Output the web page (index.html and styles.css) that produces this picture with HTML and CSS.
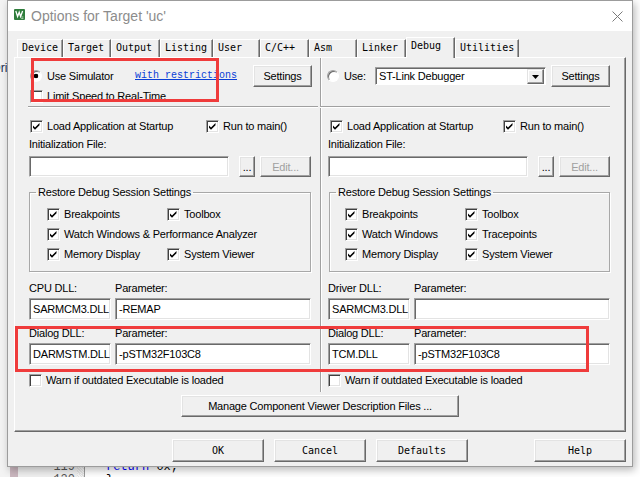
FILE: index.html
```html
<!DOCTYPE html>
<html>
<head>
<meta charset="utf-8">
<title>Options for Target 'uc'</title>
<link rel="stylesheet" href="styles.css">
</head>
<body>
<div class="desk">
  <div class="proj"><span class="proj-text">Driver</span></div>
  <div class="editor">
    <div class="code-line"><span class="band"></span><span class="ln">119</span><span class="fold"></span><span class="code"><span class="kw">return</span> 0x;</span></div>
    <div class="code-line"><span class="band"></span><span class="ln">120</span><span class="fold"></span><span class="code code-close">}</span></div>
  </div>
</div>

<div class="dialog">
  <div class="titlebar">
    <svg class="app-icon" viewBox="0 0 11 11" aria-hidden="true">
      <rect width="11" height="11" rx="1" fill="#2f7d3c"/>
      <path d="M1.8 2 L3.6 7.5 L5.2 3.2 L6.6 7.5 L8.6 2" stroke="#fff" stroke-width="1.3" fill="none"/>
      <path d="M7.2 8 h2.2 M7.2 9.6 h2.2" stroke="#cfe8cf" stroke-width="0.8"/>
    </svg>
    <span class="title">Options for Target 'uc'</span>
    <svg class="close" viewBox="0 0 11 11" aria-hidden="true">
      <path d="M0.5 0.5 L10.5 10.5 M10.5 0.5 L0.5 10.5" stroke="#7a7a7a" stroke-width="1"/>
    </svg>
  </div>

  <div class="client">
    <div class="tabs">
      <div class="tab t-device">Device</div>
      <div class="tab t-target">Target</div>
      <div class="tab t-output">Output</div>
      <div class="tab t-listing">Listing</div>
      <div class="tab t-user">User</div>
      <div class="tab t-cc">C/C++</div>
      <div class="tab t-asm">Asm</div>
      <div class="tab t-linker">Linker</div>
      <div class="tab t-debug active">Debug</div>
      <div class="tab t-util">Utilities</div>
    </div>

    <div class="panel">
      <div class="cols">
        <!-- LEFT: simulator -->
        <div class="col col-left">
          <div class="row row-use">
            <span class="opt opt-sim"><span class="radio on"></span>Use Simulator</span>
            <span class="link">with restrictions</span>
            <span class="btn btn-settings">Settings</span>
          </div>
          <div class="row row-limit">
            <span class="opt opt-first"><span class="cb"></span>Limit Speed to Real-Time</span>
          </div>
          <div class="sep sep-left"></div>
          <div class="row row-load">
            <span class="opt load-l"><span class="cb checked"><svg viewBox="0 0 11 11"><path d="M2 4.5 L4 6.5 L8.5 2 L8.5 4.2 L4 8.7 L2 6.7 Z" fill="#000"/></svg></span>Load Application at Startup</span>
            <span class="opt"><span class="cb checked"><svg viewBox="0 0 11 11"><path d="M2 4.5 L4 6.5 L8.5 2 L8.5 4.2 L4 8.7 L2 6.7 Z" fill="#000"/></svg></span>Run to main()</span>
          </div>
          <div class="row row-label">Initialization File:</div>
          <div class="row row-file">
            <div class="field field-file"></div>
            <span class="btn btn-dots">...</span>
            <span class="btn btn-edit disabled">Edit...</span>
          </div>
          <fieldset class="group">
            <legend>Restore Debug Session Settings</legend>
            <div class="group-grid">
              <span class="opt"><span class="cb checked"><svg viewBox="0 0 11 11"><path d="M2 4.5 L4 6.5 L8.5 2 L8.5 4.2 L4 8.7 L2 6.7 Z" fill="#000"/></svg></span>Breakpoints</span>
              <span class="opt"><span class="cb checked"><svg viewBox="0 0 11 11"><path d="M2 4.5 L4 6.5 L8.5 2 L8.5 4.2 L4 8.7 L2 6.7 Z" fill="#000"/></svg></span>Toolbox</span>
              <span class="opt span2"><span class="cb checked"><svg viewBox="0 0 11 11"><path d="M2 4.5 L4 6.5 L8.5 2 L8.5 4.2 L4 8.7 L2 6.7 Z" fill="#000"/></svg></span>Watch Windows &amp; Performance Analyzer</span>
              <span class="opt"><span class="cb checked"><svg viewBox="0 0 11 11"><path d="M2 4.5 L4 6.5 L8.5 2 L8.5 4.2 L4 8.7 L2 6.7 Z" fill="#000"/></svg></span>Memory Display</span>
              <span class="opt"><span class="cb checked"><svg viewBox="0 0 11 11"><path d="M2 4.5 L4 6.5 L8.5 2 L8.5 4.2 L4 8.7 L2 6.7 Z" fill="#000"/></svg></span>System Viewer</span>
            </div>
          </fieldset>
          <div class="row row-dll-label"><span class="dll-lab">CPU DLL:</span><span>Parameter:</span></div>
          <div class="row row-dll">
            <div class="field field-dll">SARMCM3.DLL</div>
            <div class="field field-param">-REMAP</div>
          </div>
          <div class="row row-dll-label second"><span class="dll-lab">Dialog DLL:</span><span>Parameter:</span></div>
          <div class="row row-dll">
            <div class="field field-dll">DARMSTM.DLL</div>
            <div class="field field-param">-pSTM32F103C8</div>
          </div>
          <div class="row row-warn">
            <span class="opt"><span class="cb"></span>Warn if outdated Executable is loaded</span>
          </div>
        </div>

        <!-- RIGHT: target debugger -->
        <div class="col col-right">
          <div class="row row-use">
            <span class="opt opt-use"><span class="radio"></span>Use:</span>
            <div class="select">
              <span class="select-text">ST-Link Debugger</span>
              <span class="select-arrow"><svg viewBox="0 0 7 4"><path d="M0 0 H7 L3.5 4 Z" fill="#000"/></svg></span>
            </div>
            <span class="btn btn-settings btn-settings-r">Settings</span>
          </div>
          <div class="row row-limit"></div>
          <div class="sep sep-right"></div>
          <div class="row row-load">
            <span class="opt load-r"><span class="cb checked"><svg viewBox="0 0 11 11"><path d="M2 4.5 L4 6.5 L8.5 2 L8.5 4.2 L4 8.7 L2 6.7 Z" fill="#000"/></svg></span>Load Application at Startup</span>
            <span class="opt"><span class="cb checked"><svg viewBox="0 0 11 11"><path d="M2 4.5 L4 6.5 L8.5 2 L8.5 4.2 L4 8.7 L2 6.7 Z" fill="#000"/></svg></span>Run to main()</span>
          </div>
          <div class="row row-label">Initialization File:</div>
          <div class="row row-file">
            <div class="field field-file"></div>
            <span class="btn btn-dots">...</span>
            <span class="btn btn-edit disabled">Edit...</span>
          </div>
          <fieldset class="group group-r">
            <legend>Restore Debug Session Settings</legend>
            <div class="group-grid">
              <span class="opt"><span class="cb checked"><svg viewBox="0 0 11 11"><path d="M2 4.5 L4 6.5 L8.5 2 L8.5 4.2 L4 8.7 L2 6.7 Z" fill="#000"/></svg></span>Breakpoints</span>
              <span class="opt"><span class="cb checked"><svg viewBox="0 0 11 11"><path d="M2 4.5 L4 6.5 L8.5 2 L8.5 4.2 L4 8.7 L2 6.7 Z" fill="#000"/></svg></span>Toolbox</span>
              <span class="opt"><span class="cb checked"><svg viewBox="0 0 11 11"><path d="M2 4.5 L4 6.5 L8.5 2 L8.5 4.2 L4 8.7 L2 6.7 Z" fill="#000"/></svg></span>Watch Windows</span>
              <span class="opt"><span class="cb checked"><svg viewBox="0 0 11 11"><path d="M2 4.5 L4 6.5 L8.5 2 L8.5 4.2 L4 8.7 L2 6.7 Z" fill="#000"/></svg></span>Tracepoints</span>
              <span class="opt"><span class="cb checked"><svg viewBox="0 0 11 11"><path d="M2 4.5 L4 6.5 L8.5 2 L8.5 4.2 L4 8.7 L2 6.7 Z" fill="#000"/></svg></span>Memory Display</span>
              <span class="opt"><span class="cb checked"><svg viewBox="0 0 11 11"><path d="M2 4.5 L4 6.5 L8.5 2 L8.5 4.2 L4 8.7 L2 6.7 Z" fill="#000"/></svg></span>System Viewer</span>
            </div>
          </fieldset>
          <div class="row row-dll-label"><span class="dll-lab">Driver DLL:</span><span>Parameter:</span></div>
          <div class="row row-dll">
            <div class="field field-dll">SARMCM3.DLL</div>
            <div class="field field-param"></div>
          </div>
          <div class="row row-dll-label second"><span class="dll-lab">Dialog DLL:</span><span>Parameter:</span></div>
          <div class="row row-dll">
            <div class="field field-dll">TCM.DLL</div>
            <div class="field field-param">-pSTM32F103C8</div>
          </div>
          <div class="row row-warn">
            <span class="opt"><span class="cb"></span>Warn if outdated Executable is loaded</span>
          </div>
        </div>
      </div>
      <div class="manage-row">
        <span class="btn btn-manage">Manage Component Viewer Description Files ...</span>
      </div>
    </div>

    <div class="footer">
      <span class="btn fbtn fbtn-ok">OK</span>
      <span class="btn fbtn">Cancel</span>
      <span class="btn fbtn">Defaults</span>
      <span class="btn fbtn fbtn-help">Help</span>
    </div>
  </div>

  <div class="mark mark1"></div>
  <div class="mark mark2"></div>
</div>
</body>
</html>
```

FILE: styles.css
```css
* { box-sizing: border-box; }
html, body { margin: 0; padding: 0; }
body {
  width: 640px;
  height: 477px;
  overflow: hidden;
  position: relative;
  background: #ffffff;
  font-family: "Liberation Sans", Arial, sans-serif;
  font-size: 11px;
  letter-spacing: -0.2px;
  line-height: 14px;
  color: #000;
}

/* ---------- background editor ---------- */
.desk { display: flex; height: 477px; }
.proj {
  width: 10px;
  flex: none;
  background: #f3f3f3;
  padding-top: 61px;
  overflow: hidden;
}
.proj-text {
  display: block;
  margin-left: -8px;
  font-size: 12px;
  letter-spacing: 0;
  color: #1b2a4e;
  white-space: nowrap;
}
.editor { flex: 1; padding-top: 461px; }
.code-line {
  display: flex;
  height: 13px;
  font-family: "Liberation Mono", monospace;
  font-size: 12px;
  line-height: 13px;
  letter-spacing: 0;
}
.band { width: 8px; background: #cbb7bf; flex: none; }
.ln {
  width: 59px;
  flex: none;
  background: #f0f0f0;
  color: #555;
  text-align: right;
  padding-right: 2px;
}
.fold {
  width: 8px;
  flex: none;
  background: repeating-linear-gradient(45deg, #e4e4e4 0 1px, #f6f6f6 1px 2px);
  border-right: 1px solid #9a9a9a;
}
.code { padding-left: 21px; color: #000; white-space: pre; }
.kw { color: #0000ff; }

/* ---------- dialog ---------- */
.dialog {
  position: absolute;
  left: 7px;
  top: 0;
  width: 626px;
  height: 467px;
  border: 1px solid #9c9c9c;
  background: #f0f0f0;
  box-shadow: 2px 3px 8px rgba(0, 0, 0, 0.28);
  display: flex;
  flex-direction: column;
}
.titlebar {
  height: 30px;
  flex: none;
  background: #ffffff;
  display: flex;
  align-items: center;
}
.app-icon { width: 11px; height: 11px; margin-left: 6px; margin-top: -3px; flex: none; }
.title {
  margin-left: 6px;
  font-size: 14px;
  letter-spacing: 0;
  color: #8c8c8c;
  white-space: nowrap;
}
.close { width: 11px; height: 11px; margin-left: auto; margin-right: 9px; flex: none; }

.client {
  flex: 1;
  padding: 6px 5px 0 6px;
  display: flex;
  flex-direction: column;
}

/* tabs */
.tabs {
  display: flex;
  align-items: flex-end;
  height: 20px;
  padding-left: 3px;
  position: relative;
  z-index: 1;
  flex: none;
}
.tab {
  height: 18px;
  flex: none;
  background: #f0f0f0;
  border-top: 1px solid #ffffff;
  border-left: 1px solid #ffffff;
  border-right: 1px solid #696969;
  box-shadow: inset -1px 0 #a0a0a0;
  padding-left: 4px;
  font-family: "DejaVu Sans Mono", "Liberation Mono", monospace;
  font-size: 10px;
  letter-spacing: 0;
  line-height: 16px;
  white-space: nowrap;
}
.tab.active { height: 21px; margin-bottom: -1px; line-height: 15px; }
.t-device { width: 46px; }
.t-target { width: 48px; }
.t-output { width: 49px; }
.t-listing { width: 53px; }
.t-user { width: 47px; }
.t-cc { width: 49px; }
.t-asm { width: 48px; }
.t-linker { width: 49px; }
.t-debug { width: 49px; }
.t-util { width: 64px; }

/* panel */
.panel {
  width: 612px;
  height: 375px;
  flex: none;
  border: 1px solid;
  border-color: #ffffff #696969 #696969 #ffffff;
  box-shadow: inset -1px -1px #a0a0a0;
  display: flex;
  flex-direction: column;
}
.cols { display: flex; height: 334px; flex: none; }
.col { display: flex; flex-direction: column; padding-top: 7px; }
.col-left { width: 305px; padding-left: 14px; }
.col-right {
  width: 305px;
  padding-left: 7px;
  border-left: 1px solid #a0a0a0;
  box-shadow: inset 1px 0 #ffffff;
}

.row { display: flex; align-items: center; white-space: nowrap; flex: none; }
.row-use { height: 22px; width: 282px; }
.row-limit { height: 18px; }
.sep {
  height: 2px;
  margin-top: 1px;
  width: 290px;
  border-top: 1px solid #a0a0a0;
  border-bottom: 1px solid #ffffff;
  flex: none;
}
.sep-left { margin-left: -1px; }
.sep-right { margin-left: -8px; }
.row-load { height: 18px; margin-top: 9px; }
.row-label { height: 18px; }
.row-file { height: 21px; margin-top: 3px; }
.row-dll-label { height: 16px; margin-top: 8px; }
.row-dll-label.second { margin-top: 5px; }
.row-dll { height: 22px; margin-top: 2px; gap: 4px; }
.row-warn { height: 16px; margin-top: 7px; }

.opt { display: inline-flex; align-items: center; white-space: nowrap; }
.opt-sim { width: 106px; padding-left: 1px; }
.opt-first { padding-left: 1px; }
.opt-use { width: 48px; margin-left: -1px; }
.load-l { width: 177px; padding-left: 1px; }
.load-r { width: 175px; padding-left: 2px; }

.link {
  font-family: "Liberation Mono", monospace;
  font-size: 10px;
  letter-spacing: 0;
  color: #0a3fd6;
  text-decoration: underline;
}

/* checkbox & radio */
.cb {
  width: 13px;
  height: 13px;
  flex: none;
  margin-right: 4px;
  background: #ffffff;
  border: 1px solid;
  border-color: #a0a0a0 #ffffff #ffffff #a0a0a0;
  box-shadow: inset 1px 1px #404040, inset -1px -1px #e3e3e3;
  display: inline-flex;
}
.cb svg { width: 11px; height: 11px; }
.radio {
  width: 12px;
  height: 12px;
  flex: none;
  margin-right: 5px;
  border-radius: 50%;
  background: #ffffff;
  border: 1px solid;
  border-color: #a0a0a0 #ffffff #ffffff #a0a0a0;
  box-shadow: inset 1px 1px #696969;
}
.radio.on { background: radial-gradient(circle at 50% 50%, #000 0 2px, #fff 2.6px); }

/* fields */
.field {
  background: #ffffff;
  border: 1px solid;
  border-color: #a0a0a0 #ffffff #ffffff #a0a0a0;
  box-shadow: inset 1px 1px #696969, inset -1px -1px #e3e3e3;
  padding-left: 3px;
  height: 100%;
  display: flex;
  align-items: center;
  white-space: nowrap;
  overflow: hidden;
}
.field-file { width: 200px; }
.field-dll { width: 82px; }
.field-param { width: 196px; }
.dll-lab { width: 86px; }

/* select */
.select {
  width: 171px;
  height: 18px;
  flex: none;
  display: flex;
  background: #ffffff;
  border: 1px solid;
  border-color: #a0a0a0 #ffffff #ffffff #a0a0a0;
  box-shadow: inset 1px 1px #696969;
  padding: 1px 1px 0 2px;
}
.select-text { flex: 1; line-height: 15px; padding-left: 1px; }
.select-arrow {
  width: 17px;
  height: 15px;
  flex: none;
  background: #f0f0f0;
  border: 1px solid;
  border-color: #e3e3e3 #696969 #696969 #e3e3e3;
  box-shadow: inset -1px -1px #a0a0a0, inset 1px 1px #fff;
  display: flex;
  align-items: center;
  justify-content: center;
}
.select-arrow svg { width: 7px; height: 4px; }

/* buttons */
.btn {
  background: #f0f0f0;
  border: 1px solid;
  border-color: #ffffff #696969 #696969 #ffffff;
  box-shadow: inset -1px -1px #a0a0a0, inset 1px 1px #e3e3e3;
  display: inline-flex;
  align-items: center;
  justify-content: center;
  white-space: nowrap;
  flex: none;
}
.btn-settings { width: 59px; height: 22px; margin-left: auto; margin-right: -1px; }
.btn-settings-r { margin-left: 5px; margin-right: 0; }
.btn-dots { width: 16px; height: 21px; margin-left: 10px; }
.btn-edit { width: 51px; height: 21px; margin-left: 5px; }
.disabled { color: #a0a0a0; }

/* group box */
.group {
  margin: 8px 0 0 0;
  padding: 5px 0 7px 17px;
  width: 282px;
  border: 1px solid #a8a8a8;
  box-shadow: inset 1px 1px #ffffff, 1px 1px #ffffff;
  flex: none;
}
.group-r { margin-left: 1px; width: 281px; padding-left: 15px; }
.group legend {
  margin-left: -11px;
  padding: 0 2px;
  line-height: 14px;
}
.group-r legend { margin-left: -9px; }
.group-grid {
  display: grid;
  grid-template-columns: 120px 1fr;
  grid-auto-rows: 20px;
  align-items: center;
}
.span2 { grid-column: span 2; }

.manage-row { display: flex; justify-content: center; margin-top: 3px; }
.btn-manage { width: 278px; height: 22px; }

/* footer */
.footer { display: flex; margin-top: 7px; flex: none; }
.fbtn {
  width: 92px;
  height: 23px;
  margin-left: 10px;
  font-family: "DejaVu Sans Mono", "Liberation Mono", monospace;
  font-size: 10px;
  letter-spacing: 0;
}
.fbtn-ok { margin-left: 158px; }
.fbtn-help { margin-left: 66px; }

/* red annotation rectangles */
.mark {
  position: absolute;
  border: 3px solid #ef3b3b;
  pointer-events: none;
}
.mark1 { left: 23px; top: 57px; width: 188px; height: 44px; }
.mark2 { left: 7px; top: 325px; width: 574px; height: 46px; }
```
